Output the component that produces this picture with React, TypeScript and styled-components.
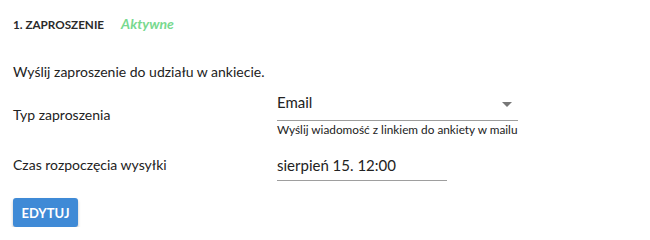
import React from "react";
import styled, { createGlobalStyle } from "styled-components";

const Global = createGlobalStyle`
  html, body { margin: 0; padding: 0; background: #fff; }
  body { font-family: Lato, "Open Sans", sans-serif; color: #222; }
`;

const Page = styled.div`
  padding: 14px 13px 0 13px;
  width: 650px;
  box-sizing: border-box;
`;

const Header = styled.div`
  display: flex;
  align-items: baseline;
  gap: 17px;
  height: 20px;
`;

const Title = styled.span`
  font-size: 11.7px;
  line-height: 20px;
  font-weight: 700;
  color: #2a2a2a;
  text-transform: uppercase;
`;

const Status = styled.span`
  font-size: 14px;
  line-height: 20px;
  font-weight: 700;
  font-style: italic;
  color: #78d98f;
`;

const Intro = styled.p`
  margin: 28px 0 0 0;
  font-size: 14px;
  line-height: 20px;
`;

const Row = styled.div<{ $top: number }>`
  display: grid;
  grid-template-columns: 264px 1fr;
  align-items: start;
  margin-top: ${(p) => p.$top}px;
`;

const Label = styled.div<{ $pad: number }>`
  font-size: 14px;
  line-height: 20px;
  padding-top: ${(p) => p.$pad}px;
`;

const Field = styled.div<{ $w: number }>`
  width: ${(p) => p.$w}px;
`;

const Input = styled.div<{ $bottom: number }>`
  display: flex;
  align-items: flex-start;
  justify-content: space-between;
  padding: 5px 0 ${(p) => p.$bottom}px 0;
  line-height: 18px;
  border-bottom: 1px solid #9e9e9e;
  font-size: 15px;
  color: #222;
`;

const Arrow = styled.span`
  width: 0;
  height: 0;
  margin-top: 9px;
  margin-right: 6px;
  border-left: 5px solid transparent;
  border-right: 5px solid transparent;
  border-top: 5px solid #777;
`;

const Helper = styled.div`
  font-size: 11.8px;
  line-height: 14px;
  margin-top: 2px;
  color: #222;
  white-space: nowrap;
`;

const Button = styled.button`
  margin-top: 17px;
  display: inline-flex;
  align-items: center;
  justify-content: center;
  height: 29px;
  width: 65px;
  border: none;
  border-radius: 3px;
  background: #3f8ad6;
  color: #fff;
  font-family: Lato, sans-serif;
  font-size: 13px;
  font-weight: 700;
  box-shadow: 0 2px 3px rgba(0, 0, 0, 0.25);
  padding: 0;
`;

export default function App() {
  return (
    <Page>
      <Global />
      <Header>
        <Title>1. Zaproszenie</Title>
        <Status>Aktywne</Status>
      </Header>
      <Intro>Wyślij zaproszenie do udziału w ankiecie.</Intro>
      <Row $top={6}>
        <Label $pad={17}>Typ zaproszenia</Label>
        <Field $w={241}>
          <Input $bottom={9}>
            Email
            <Arrow />
          </Input>
          <Helper>Wyślij wiadomość z linkiem do ankiety w mailu</Helper>
        </Field>
      </Row>
      <Row $top={14}>
        <Label $pad={4}>Czas rozpoczęcia wysyłki</Label>
        <Field $w={170}>
          <Input $bottom={6}>sierpień 15. 12:00</Input>
        </Field>
      </Row>
      <Button>EDYTUJ</Button>
    </Page>
  );
}
